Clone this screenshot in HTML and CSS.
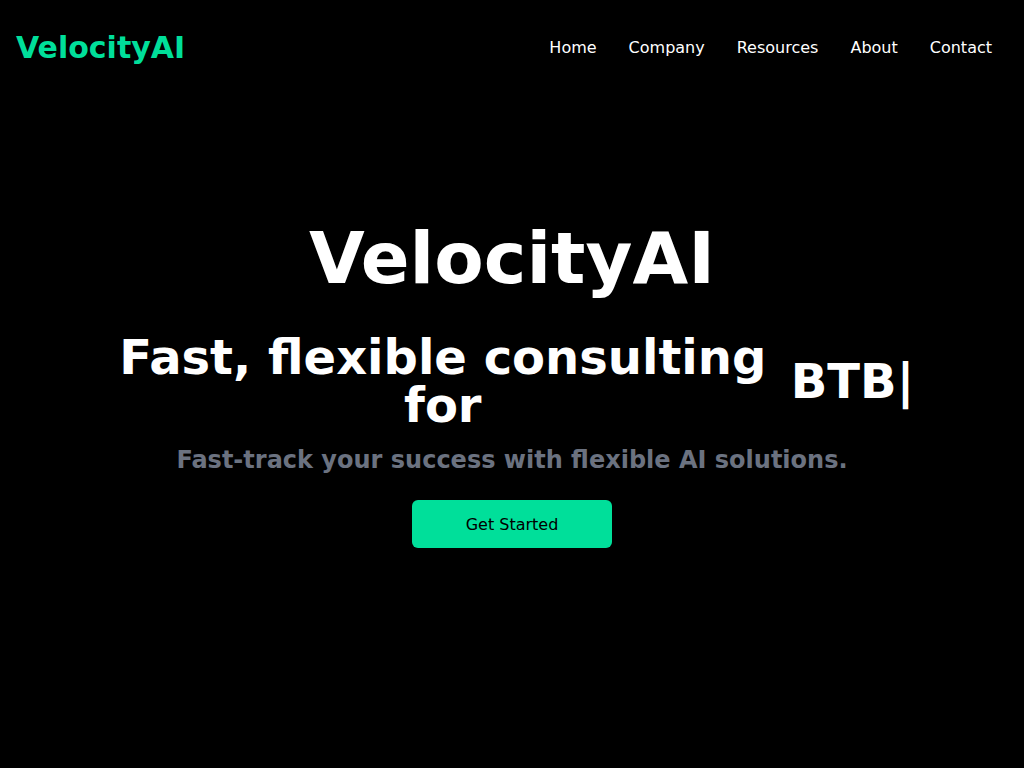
FILE: index.html
```html
<!DOCTYPE html>
<html lang="en">
<head>
<meta charset="utf-8">
<title>VelocityAI</title>
<link rel="stylesheet" href="styles.css">
</head>
<body>
<header class="navbar">
  <div class="brand">VelocityAI</div>
  <ul class="nav-links">
    <li>Home</li>
    <li>Company</li>
    <li>Resources</li>
    <li>About</li>
    <li>Contact</li>
  </ul>
</header>
<main class="hero">
  <h1 class="hero-title">VelocityAI</h1>
  <h2 class="hero-headline">
    <span class="headline-lead">Fast, flexible consulting for</span>
    <span class="headline-typed">BTB|</span>
  </h2>
  <p class="hero-sub">Fast-track your success with flexible AI solutions.</p>
  <button class="cta">Get Started</button>
</main>
</body>
</html>
```
FILE: styles.css
```css
* { box-sizing: border-box; }
html, body {
  margin: 0;
  padding: 0;
  background: #000;
  color: #fff;
  font-family: "DejaVu Sans", sans-serif;
}
.navbar {
  display: flex;
  justify-content: space-between;
  align-items: center;
  height: 96px;
  padding: 0 16px;
}
.brand {
  font-size: 30px;
  line-height: 36px;
  font-weight: 700;
  color: #00df9a;
}
.nav-links {
  display: flex;
  list-style: none;
  margin: 0;
  padding: 0;
}
.nav-links li {
  padding: 16px;
  font-size: 16px;
  line-height: 24px;
}
.hero {
  height: 672px;
  padding-top: 126px;
  display: flex;
  flex-direction: column;
  align-items: center;
  text-align: center;
}
.hero-title {
  margin: 0 0 39px;
  font-size: 72px;
  line-height: 72px;
  font-weight: 700;
}
.hero-headline {
  margin: 0;
  padding-left: 8px;
  display: flex;
  justify-content: center;
  align-items: center;
  gap: 23px;
  font-size: 48px;
  line-height: 48px;
  font-weight: 700;
}
.headline-lead {
  max-width: 650px;
}
.hero-sub {
  margin: 15px 0 24px;
  font-size: 24px;
  line-height: 32px;
  font-weight: 700;
  color: #6b7280;
}
.cta {
  width: 200px;
  height: 48px;
  border: 0;
  border-radius: 6px;
  background: #00df9a;
  color: #000;
  font-family: "DejaVu Sans", sans-serif;
  font-size: 16px;
  font-weight: 500;
}
```
